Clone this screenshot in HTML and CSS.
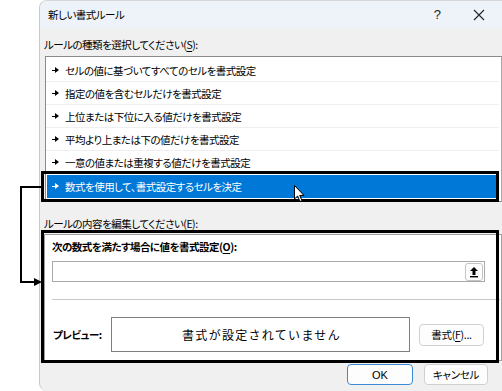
FILE: index.html
```html
<!DOCTYPE html>
<html lang="ja">
<head>
    <meta charset="UTF-8">
    <meta name="viewport" content="width=device-width, initial-scale=1.0">
    <title>新しい書式ルール</title>
    <link rel="stylesheet" href="styles.css">
</head>
<body>
    <div class="window">
        <div class="titlebar">
            <span class="title">新しい書式ルール</span>
            <span class="help">?</span>
            <svg class="close" width="12" height="12" viewBox="0 0 12 12">
                <path d="M1 1 L11 11 M11 1 L1 11" stroke="#222" stroke-width="1.1" fill="none"/>
            </svg>
        </div>

        <div class="content">
            <div class="label">ルールの種類を選択してください(<u>S</u>):</div>
            <ul class="rule-list">
                <li><i class="mark"></i>セルの値に基づいてすべてのセルを書式設定</li>
                <li><i class="mark"></i>指定の値を含むセルだけを書式設定</li>
                <li><i class="mark"></i>上位または下位に入る値だけを書式設定</li>
                <li><i class="mark"></i>平均より上または下の値だけを書式設定</li>
                <li><i class="mark"></i>一意の値または重複する値だけを書式設定</li>
                <li class="selected"><i class="mark"></i>数式を使用して、書式設定するセルを決定</li>
            </ul>

            <div class="label label-edit">ルールの内容を編集してください(<u>E</u>):</div>
            <div class="group">
                <div class="group-title">次の数式を満たす場合に値を書式設定(<u>O</u>):</div>
                <div class="formula">
                    <button class="pick" type="button">
                        <svg width="10" height="12" viewBox="0 0 10 12">
                            <path d="M5 1 L1 5 H3.5 V9 H6.5 V5 H9 Z" fill="#000"/>
                            <rect x="1" y="10" width="8" height="1.4" fill="#000"/>
                        </svg>
                    </button>
                </div>
                <div class="divider"></div>
                <div class="preview-row">
                    <span class="preview-label">プレビュー:</span>
                    <div class="preview-box">書式が設定されていません</div>
                    <button class="btn btn-format" type="button">書式(<u>F</u>)...</button>
                </div>
            </div>

            <div class="actions">
                <button class="btn btn-ok" type="button">OK</button>
                <button class="btn btn-cancel" type="button">キャンセル</button>
            </div>
        </div>
    </div>

    <!-- annotation overlays -->
    <div class="mark-box box-row"></div>
    <div class="mark-box box-group"></div>
    <svg class="connector" width="46" height="300" viewBox="0 0 46 300">
        <path d="M42 187 H21 V282 H35" stroke="#000" stroke-width="2" fill="none"/>
        <path d="M34 278 L42 282 L34 286 Z" fill="#000"/>
    </svg>
    <svg class="cursor" width="12" height="18" viewBox="0 0 12 18">
        <path d="M0.5 0.5 V14 L3.6 11 L6 16.5 L8 15.6 L5.7 10.4 H10 Z" fill="#fff" stroke="#000" stroke-width="1"/>
    </svg>
</body>
</html>
```

FILE: styles.css
```css
/* General styles */
* {
    margin: 0;
    padding: 0;
    box-sizing: border-box;
}

body {
    background: #fff;
    width: 502px;
    height: 391px;
    overflow: hidden;
    position: relative;
    font-family: 'Noto Sans CJK JP', 'Noto Sans', sans-serif;
    font-size: 10.5px;
    letter-spacing: -0.5px;
    color: #000;
    font-feature-settings: "palt";
}

u {
    text-decoration: underline;
    text-underline-offset: 2px;
}

.window {
    margin-left: 39px;
    width: 470px;
    height: 391px;
    background: #f0f0f0;
    border-left: 1px solid #c9c9c9;
    border-top: 1px solid #d6d6d6;
    border-radius: 8px 0 0 8px;
    overflow: hidden;
}

.titlebar {
    height: 27px;
    background: #eef3f9;
    display: flex;
    align-items: center;
    padding-left: 8px;
}

.title {
    flex: 1;
}

.help {
    font-size: 13px;
    width: 12px;
    text-align: center;
    margin-right: 30px;
    color: #222;
    font-family: 'Liberation Sans', sans-serif;
}

.close {
    margin-right: 24px;
}

.content {
    padding: 0 7px 0 4px;
}

.label {
    height: 16px;
    line-height: 16px;
    margin-top: 9px;
}

.rule-list {
    list-style: none;
    margin-top: 3px;
    margin-left: 1px;
    height: 146px;
    background: #fff;
    border: 1px solid #8a8a8a;
    border-right-color: #a8a8a8;
    padding: 2px 1px 2px 0;
}

.rule-list li {
    height: 23px;
    display: flex;
    align-items: center;
    padding-left: 6px;
    border-bottom: 1px solid #efefef;
    margin-right: 1px;
}

.rule-list li.selected {
    margin-top: 1px;
    background: #0078d7;
    color: #fff;
    border-bottom: none;
    margin-left: 1px;
    padding-left: 5px;
}

.mark {
    display: inline-block;
    width: 7px;
    height: 7px;
    margin-right: 6px;
    position: relative;
    background:
        linear-gradient(currentColor, currentColor) 0 3px / 3px 1px no-repeat;
}

.mark::after {
    content: "";
    position: absolute;
    left: 3px;
    top: 0;
    border-left: 4px solid currentColor;
    border-top: 3.5px solid transparent;
    border-bottom: 3.5px solid transparent;
}

.label-edit {
    margin-top: 14px;
}

.group {
    margin-top: 2px;
    height: 127px;
    background: #fff;
    border: 1px solid #a0a0a0;
    padding: 4px 0 0 7px;
}

.group-title {
    font-weight: bold;
    height: 16px;
    line-height: 16px;
}

.formula {
    margin-top: 6px;
    width: 433px;
    height: 21px;
    border: 1px solid #a9a9a9;
    display: flex;
    justify-content: flex-end;
    align-items: center;
    padding-right: 1px;
}

.pick {
    width: 18px;
    height: 18px;
    border: 1px solid #c4c4c4;
    border-radius: 3px;
    background: #fdfdfd;
    display: flex;
    align-items: center;
    justify-content: center;
}

.divider {
    margin-top: 17px;
    margin-right: 1px;
    height: 1px;
    background: #c8c8c8;
}

.preview-row {
    margin-top: 17px;
    display: flex;
    align-items: center;
}

.preview-label {
    font-weight: bold;
    width: 58px;
    margin-left: 1px;
}

.preview-box {
    width: 299px;
    height: 35px;
    border: 1px solid #7f7f7f;
    display: flex;
    align-items: center;
    justify-content: center;
    font-size: 12px;
    letter-spacing: 1.3px;
    font-feature-settings: normal;
    padding-left: 2px;
}

.btn {
    font-family: inherit;
    font-size: 10.5px;
    letter-spacing: -0.3px;
    font-feature-settings: "palt";
    background: #fdfdfd;
    border: 1px solid #d0d0d0;
    border-radius: 4px;
    color: #000;
}

.btn-format {
    margin-left: 9px;
    width: 65px;
    height: 22px;
}

.actions {
    display: flex;
    justify-content: flex-end;
    gap: 11px;
    margin-top: 3px;
    padding-right: 14px;
}

.btn-ok {
    width: 66px;
    height: 21px;
    border: 1px solid #3c8ad6;
    font-family: 'Liberation Sans', sans-serif;
    font-size: 11px;
    letter-spacing: 0;
}

.btn-cancel {
    width: 64px;
    height: 21px;
}

/* annotation overlays */
.mark-box {
    position: absolute;
    left: 41px;
    width: 458px;
    border: 3px solid #000;
}

.box-row {
    top: 171px;
    height: 31px;
}

.box-group {
    top: 230px;
    height: 133px;
}

.connector {
    position: absolute;
    left: 0;
    top: 0;
}

.cursor {
    position: absolute;
    left: 294px;
    top: 185px;
}
```
